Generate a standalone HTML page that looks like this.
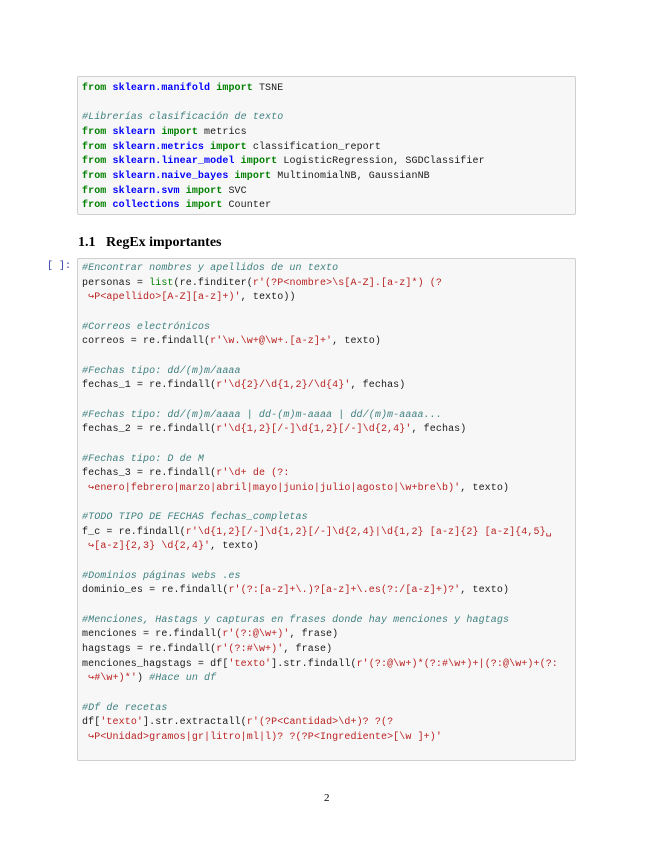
<!DOCTYPE html>
<html><head><meta charset="utf-8"><style>
body{margin:0;width:655px;height:848px;background:#fff;position:relative;overflow:hidden}
.box{position:absolute;left:77px;width:499px;background:#f7f7f7;border:1px solid #cfcfcf;border-radius:2px;box-sizing:border-box}
pre{margin:0;position:absolute;left:4px;font-family:"Liberation Mono",monospace;font-size:10px;line-height:14.66px;color:#1a1a1a;letter-spacing:0.1px}
.k{color:#008000;font-weight:bold}.m{color:#0000ff;font-weight:bold}.c{color:#408080;font-style:italic}.s{color:#ba2121}.b{color:#008000}
.h{position:absolute;left:78px;top:235px;font-family:"Liberation Serif",serif;font-weight:bold;font-size:14px}
.p{position:absolute;left:47px;top:261px;font-family:"Liberation Mono",monospace;font-size:10px;color:#303f9f}
.n{position:absolute;left:324px;top:792px;font-family:"Liberation Serif",serif;font-size:11px}
</style></head><body>
<div class="box" style="top:76px;height:139px"><pre style="top:5px"><span class="k">from</span> <span class="m">sklearn.manifold</span> <span class="k">import</span> TSNE

<span class="c">#Librerías clasificación de texto</span>
<span class="k">from</span> <span class="m">sklearn</span> <span class="k">import</span> metrics
<span class="k">from</span> <span class="m">sklearn.metrics</span> <span class="k">import</span> classification_report
<span class="k">from</span> <span class="m">sklearn.linear_model</span> <span class="k">import</span> LogisticRegression, SGDClassifier
<span class="k">from</span> <span class="m">sklearn.naive_bayes</span> <span class="k">import</span> MultinomialNB, GaussianNB
<span class="k">from</span> <span class="m">sklearn.svm</span> <span class="k">import</span> SVC
<span class="k">from</span> <span class="m">collections</span> <span class="k">import</span> Counter</pre></div>
<div class="h">1.1&nbsp;&nbsp;&nbsp;RegEx importantes</div>
<div class="p">[ ]:</div>
<div class="box" style="top:258px;height:503px"><pre style="top:3px"><span class="c">#Encontrar nombres y apellidos de un texto</span>
personas = <span class="b">list</span>(re.finditer(<span class="s">r'(?P&lt;nombre&gt;\s[A-Z].[a-z]*) (?</span>
<span class="s"> ↪P&lt;apellido&gt;[A-Z][a-z]+)'</span>, texto))

<span class="c">#Correos electrónicos</span>
correos = re.findall(<span class="s">r'\w.\w+@\w+.[a-z]+'</span>, texto)

<span class="c">#Fechas tipo: dd/(m)m/aaaa</span>
fechas_1 = re.findall(<span class="s">r'\d{2}/\d{1,2}/\d{4}'</span>, fechas)

<span class="c">#Fechas tipo: dd/(m)m/aaaa | dd-(m)m-aaaa | dd/(m)m-aaaa...</span>
fechas_2 = re.findall(<span class="s">r'\d{1,2}[/-]\d{1,2}[/-]\d{2,4}'</span>, fechas)

<span class="c">#Fechas tipo: D de M</span>
fechas_3 = re.findall(<span class="s">r'\d+ de (?:</span>
<span class="s"> ↪enero|febrero|marzo|abril|mayo|junio|julio|agosto|\w+bre\b)'</span>, texto)

<span class="c">#TODO TIPO DE FECHAS fechas_completas</span>
f_c = re.findall(<span class="s">r'\d{1,2}[/-]\d{1,2}[/-]\d{2,4}|\d{1,2} [a-z]{2} [a-z]{4,5}␣</span>
<span class="s"> ↪[a-z]{2,3} \d{2,4}'</span>, texto)

<span class="c">#Dominios páginas webs .es</span>
dominio_es = re.findall(<span class="s">r'(?:[a-z]+\.)?[a-z]+\.es(?:/[a-z]+)?'</span>, texto)

<span class="c">#Menciones, Hastags y capturas en frases donde hay menciones y hagtags</span>
menciones = re.findall(<span class="s">r'(?:@\w+)'</span>, frase)
hagstags = re.findall(<span class="s">r'(?:#\w+)'</span>, frase)
menciones_hagstags = df[<span class="s">'texto'</span>].str.findall(<span class="s">r'(?:@\w+)*(?:#\w+)+|(?:@\w+)+(?:</span>
<span class="s"> ↪#\w+)*'</span>) <span class="c">#Hace un df</span>

<span class="c">#Df de recetas</span>
df[<span class="s">'texto'</span>].str.extractall(<span class="s">r'(?P&lt;Cantidad&gt;\d+)? ?(?</span>
<span class="s"> ↪P&lt;Unidad&gt;gramos|gr|litro|ml|l)? ?(?P&lt;Ingrediente&gt;[\w ]+)'</span></pre></div>
<div class="n">2</div>
</body></html>
